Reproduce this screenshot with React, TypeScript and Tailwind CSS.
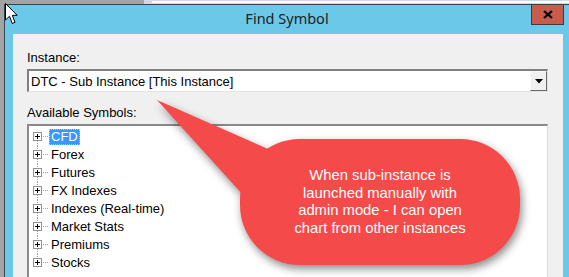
import React from "react";

const symbols = [
  "CFD",
  "Forex",
  "Futures",
  "FX Indexes",
  "Indexes (Real-time)",
  "Market Stats",
  "Premiums",
  "Stocks",
];

function TreeGlyph({ first, last }: { first: boolean; last: boolean }) {
  return (
    <svg width="16" height="18" viewBox="0 0 16 18" className="shrink-0">
      {!first && (
        <line x1="4.5" y1="0" x2="4.5" y2="4" stroke="#a0a0a0" strokeDasharray="1 1" />
      )}
      {!last && (
        <line x1="4.5" y1="13" x2="4.5" y2="18" stroke="#a0a0a0" strokeDasharray="1 1" />
      )}
      <line x1="10" y1="8.5" x2="16" y2="8.5" stroke="#a0a0a0" strokeDasharray="1 1" />
      <rect x="0.5" y="4.5" width="8" height="8" fill="#fff" stroke="#919191" />
      <line x1="2" y1="8.5" x2="7" y2="8.5" stroke="#000" />
      <line x1="4.5" y1="6" x2="4.5" y2="11" stroke="#000" />
    </svg>
  );
}

export default function App() {
  return (
    <div className="w-[569px] h-[277px] relative overflow-hidden bg-[#a3a3a3] flex flex-col font-['Liberation_Sans',Arial,sans-serif] text-[13px] text-black">
      {/* strip of the window behind */}
      <div className="h-[4px] flex shrink-0">
        <div className="w-[144px] bg-[#a3a3a3]" />
        <div className="flex-1 bg-[#cfdae2] pl-[8px] pt-[1px]">
          <div className="h-[2px] bg-white" />
        </div>
      </div>

      {/* dialog */}
      <div className="flex-1 ml-[4px] border-t border-l border-[#34434d] bg-[#6bc8e9] flex flex-col">
        <div className="h-[29px] shrink-0 grid grid-cols-[1fr_auto_1fr]">
          <div />
          <div className="self-center pb-[1px] font-['Noto_Sans',sans-serif] text-[14.5px] text-[#1e1e1e]">
            Find Symbol
          </div>
          <div className="flex justify-end pr-[5px]">
            <div className="w-[33px] h-[20px] bg-[#c75c4d] border border-[#3d3d3d] border-t-0 flex items-center justify-center">
              <svg width="10" height="9" viewBox="0 0 10 9">
                <path d="M1 1 L9 8 M9 1 L1 8" stroke="#000" strokeWidth="2.2" />
              </svg>
            </div>
          </div>
        </div>

        <div className="flex-1 ml-[8px] mr-[6px] bg-[#f0f0f0] pl-[14px] pr-[15px] pt-[16px] flex flex-col">
          <div className="leading-[15px] h-[15px]">Instance:</div>
          <div className="mt-[4px] h-[23px] bg-white border-t-2 border-l-2 border-[#7f7f7f] border-b border-r border-b-[#e3e3e3] border-r-[#e3e3e3] flex items-center">
            <div className="flex-1 pl-[2px] leading-[15px]">DTC - Sub Instance [This Instance]</div>
            <div className="w-[17px] h-full bg-[#f0f0f0] border border-t-[#f8f8f8] border-l-[#f8f8f8] border-r-[#696969] border-b-[#696969] flex items-center justify-center">
              <svg width="8" height="5" viewBox="0 0 8 5">
                <path d="M0 0 H8 L4 4.5 Z" fill="#000" />
              </svg>
            </div>
          </div>

          <div className="mt-[13px] leading-[15px] h-[15px]">Available Symbols:</div>
          <div className="mt-[4px] flex-1 bg-white border-t-2 border-l-2 border-[#8a8a8a] border-r border-r-[#dcdcdc] pl-[4px] pt-[2px]">
            {symbols.map((s, i) => (
              <div key={s} className="h-[18px] flex items-center">
                <TreeGlyph first={i === 0} last={i === symbols.length - 1} />
                <span
                  className={
                    i === 0
                      ? "h-[16px] leading-[14px] px-[1px] bg-[#3399ff] text-white border border-dotted border-[#9fcfff]"
                      : "h-[16px] leading-[16px] px-[2px]"
                  }
                >
                  {s}
                </span>
              </div>
            ))}
          </div>
        </div>
      </div>

      {/* mouse pointer */}
      <svg
        className="absolute left-[5px] top-[3px]"
        width="13"
        height="22"
        viewBox="0 0 13 22"
      >
        <path
          d="M0.5 0.5 L0.5 17 L4.5 13.2 L7.3 20.5 L10 19.3 L7.3 12.3 L12.2 12.3 Z"
          fill="#fff"
          stroke="#000"
          strokeWidth="1"
        />
      </svg>

      {/* callout */}
      <svg
        className="absolute left-0 top-0 drop-shadow-[2px_4px_4px_rgba(0,0,0,0.45)]"
        width="569"
        height="277"
        viewBox="0 0 569 277"
      >
        <path d="M157 100 L284 156 L244 196 Z" fill="#f44a4a" />
        <rect x="240" y="139" width="280" height="126" rx="60" fill="#f44a4a" />
      </svg>
      <div className="absolute left-[240px] top-[139px] w-[280px] h-[126px] flex items-center justify-center text-center text-white text-[14.8px] leading-[17.5px]">
        <div>
          When sub-instance is
          <br />
          launched manually with
          <br />
          admin mode - I can open
          <br />
          chart from other instances
        </div>
      </div>
    </div>
  );
}
